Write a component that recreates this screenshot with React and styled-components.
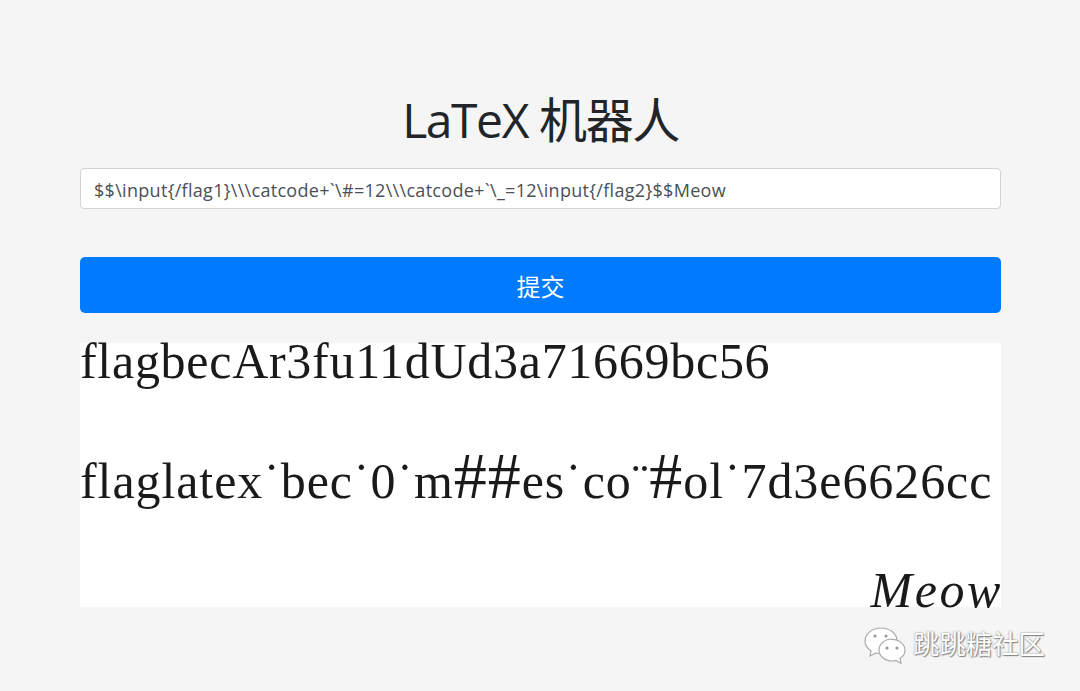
import React from 'react'
import styled, { createGlobalStyle } from 'styled-components'

const GlobalStyle = createGlobalStyle`
    html, body {
        margin: 0;
        padding: 0;
        height: 100%;
        background-color: #f5f5f5;
    }
`

const Pagina = styled.div`
    position: relative;
    box-sizing: border-box;
    width: 1080px;
    height: 691px;
    padding: 88px 79px 0 80px;
    overflow: hidden;
    background-color: #f5f5f5;
    font-family: "Open Sans", "Noto Sans CJK SC", sans-serif;
`

const Titulo = styled.h1`
    margin: 0 0 16px;
    height: 64px;
    line-height: 64px;
    text-align: center;
    font-size: 48px;
    font-weight: 400;
    letter-spacing: -1.4px;
    color: #212529;
`

const CampoTexto = styled.input`
    display: block;
    box-sizing: border-box;
    width: 100%;
    height: 41px;
    margin-bottom: 48px;
    padding: 2px 13px 0;
    border: 1px solid #ced4da;
    border-radius: 4px;
    background-color: #fff;
    color: #495057;
    font-family: inherit;
    font-size: 18px;
    letter-spacing: 0.3px;
    outline: none;
`

const BotaoEnviar = styled.button`
    display: block;
    width: 100%;
    height: 56px;
    margin-bottom: 30px;
    border: none;
    border-radius: 5px;
    background-color: #007bff;
    color: #fff;
    font-family: inherit;
    font-size: 24px;
`

const Resultado = styled.div`
    display: flex;
    flex-direction: column;
    height: 264px;
    background-color: #fff;
    color: #1a1a1a;
    font-family: "Liberation Serif", serif;
`

const LinhaFlag = styled.div`
    height: 120px;
    padding-top: 1px;
    box-sizing: border-box;
    line-height: 34px;
    font-size: 50px;
    letter-spacing: ${props => props.$espaco}px;
    white-space: nowrap;
`

const Cerquilha = styled.span`
    font-size: 66px;
    line-height: 0;
    font-weight: 400;
`

const LinhaMeow = styled.div`
    height: 24px;
    margin-top: auto;
    margin-right: -2px;
    line-height: 14px;
    text-align: right;
    font-size: 50px;
    font-style: italic;
    letter-spacing: 2.6px;
`

const MarcaDagua = styled.div`
    position: absolute;
    left: 863px;
    top: 622px;
    display: flex;
    align-items: center;
    gap: 6px;
    color: #fff;
    font-size: 26.4px;
    line-height: 44px;
    text-shadow: 0 0 2px #777, 1px 1px 1px #888;
`

const IconeChat = () => (
    <svg width="44" height="44" viewBox="0 0 44 44" fill="#fff" stroke="#aaa" strokeWidth="1.2">
        <path d="M18 6C9 6 2 12 2 19c0 4 2 7 6 10l-1 5 6-3c2 .6 3 .7 5 .7 9 0 16-6 16-13S27 6 18 6z" />
        <path d="M29 17c-7 0-13 5-13 11s6 11 13 11c2 0 3-.2 4-.6l5 3-1-5c3-2 5-5 5-8 0-6-6-11-13-11z" />
        <circle cx="12" cy="14" r="1.6" fill="#999" stroke="none" />
        <circle cx="23" cy="14" r="1.6" fill="#999" stroke="none" />
        <circle cx="24" cy="26" r="1.6" fill="#999" stroke="none" />
        <circle cx="34" cy="26" r="1.6" fill="#999" stroke="none" />
    </svg>
)

class App extends React.Component {
    state = {
        inputLatex: "$$\\input{/flag1}\\\\\\catcode+`\\#=12\\\\\\catcode+`\\_=12\\input{/flag2}$$Meow"
    }

    onChangeInputLatex = (event) => {
        this.setState({inputLatex: event.target.value})
    }

    render () {
        return (
            <Pagina>
                <GlobalStyle />
                <Titulo>LaTeX 机器人</Titulo>
                <CampoTexto type="text" value={this.state.inputLatex} onChange={this.onChangeInputLatex} />
                <BotaoEnviar>提交</BotaoEnviar>
                <Resultado>
                    <LinhaFlag $espaco={0.72}>flagbecAr3fu11dUd3a71669bc56</LinhaFlag>
                    <LinhaFlag $espaco={0.92}>
                        flaglatex˙bec˙0˙m<Cerquilha>##</Cerquilha>es˙co¨<Cerquilha>#</Cerquilha>ol˙7d3e6626cc
                    </LinhaFlag>
                    <LinhaMeow>Meow</LinhaMeow>
                </Resultado>
                <MarcaDagua>
                    <IconeChat />
                    <span>跳跳糖社区</span>
                </MarcaDagua>
            </Pagina>
        )
    }
}

export default App
